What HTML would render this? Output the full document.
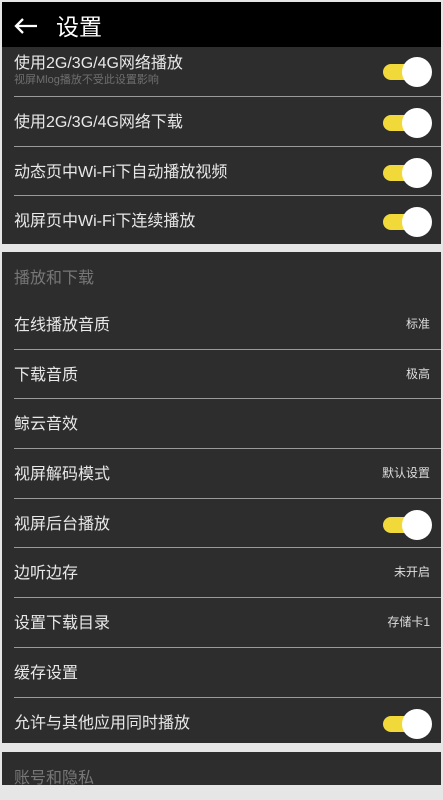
<!DOCTYPE html>
<html><head><meta charset="utf-8"><style>
*{margin:0;padding:0;box-sizing:border-box}
body{width:443px;height:785px;overflow:hidden;background:#e6e6e6;font-family:"Liberation Sans","Noto Sans CJK SC",sans-serif;position:relative}
.hdr{position:absolute;left:2px;top:2px;width:439px;height:45px;background:#000;color:#fff}
.hdr svg{position:absolute;left:12px;top:15px}
.hdr .t{position:absolute;left:54px;top:6px;font-size:23px}
.sec{position:absolute;left:2px;width:439px;background:#2d2d2d}
.row{position:relative;height:49.7px;color:#e8e8e8;font-size:16px}
.row .l{position:absolute;left:12px;top:11px}
.row:after{content:"";position:absolute;left:12px;right:0;bottom:0;height:1px;background:#9a9a9a}
.row.last:after{display:none}
.v{position:absolute;right:11px;top:15px;font-size:12px;color:#ddd}
.tg{position:absolute;left:381px;top:18px;width:40px;height:16px;background:#f2d93a;border-radius:8px}
.tg:after{content:"";position:absolute;left:19px;top:-7px;width:30px;height:30px;border-radius:50%;background:#fff}
.sh{height:48px;color:#777;font-size:16px;position:relative}
.sh span{position:absolute;left:12px;top:12px}
</style></head><body>
<div class="hdr"><svg width="24" height="18" viewBox="0 0 24 18"><path d="M23 9H2M9 2L2 9l7 7" fill="none" stroke="#fff" stroke-width="2.3"/></svg><span class="t">设置</span></div>
<div class="sec" style="top:47px;height:197px">
 <div class="row" style="height:50px"><span class="l" style="top:2px">使用2G/3G/4G网络播放</span><span style="position:absolute;left:12px;top:24px;font-size:11px;color:#6f6f6f">视屏Mlog播放不受此设置影响</span><span class="tg" style="top:17px"></span></div>
 <div class="row"><span class="l">使用2G/3G/4G网络下载</span><span class="tg"></span></div>
 <div class="row"><span class="l">动态页中Wi-Fi下自动播放视频</span><span class="tg"></span></div>
 <div class="row last"><span class="l">视屏页中Wi-Fi下连续播放</span><span class="tg"></span></div>
</div>
<div class="sec" style="top:252px;height:491px">
 <div class="sh"><span>播放和下载</span></div>
 <div class="row"><span class="l">在线播放音质</span><span class="v">标准</span></div>
 <div class="row"><span class="l">下载音质</span><span class="v">极高</span></div>
 <div class="row"><span class="l">鲸云音效</span></div>
 <div class="row"><span class="l">视屏解码模式</span><span class="v">默认设置</span></div>
 <div class="row"><span class="l">视屏后台播放</span><span class="tg"></span></div>
 <div class="row"><span class="l">边听边存</span><span class="v">未开启</span></div>
 <div class="row"><span class="l">设置下载目录</span><span class="v">存储卡1</span></div>
 <div class="row"><span class="l">缓存设置</span></div>
 <div class="row last"><span class="l">允许与其他应用同时播放</span><span class="tg"></span></div>
</div>
<div class="sec" style="top:752px;height:33px">
 <div class="sh"><span>账号和隐私</span></div>
</div>
</body></html>
